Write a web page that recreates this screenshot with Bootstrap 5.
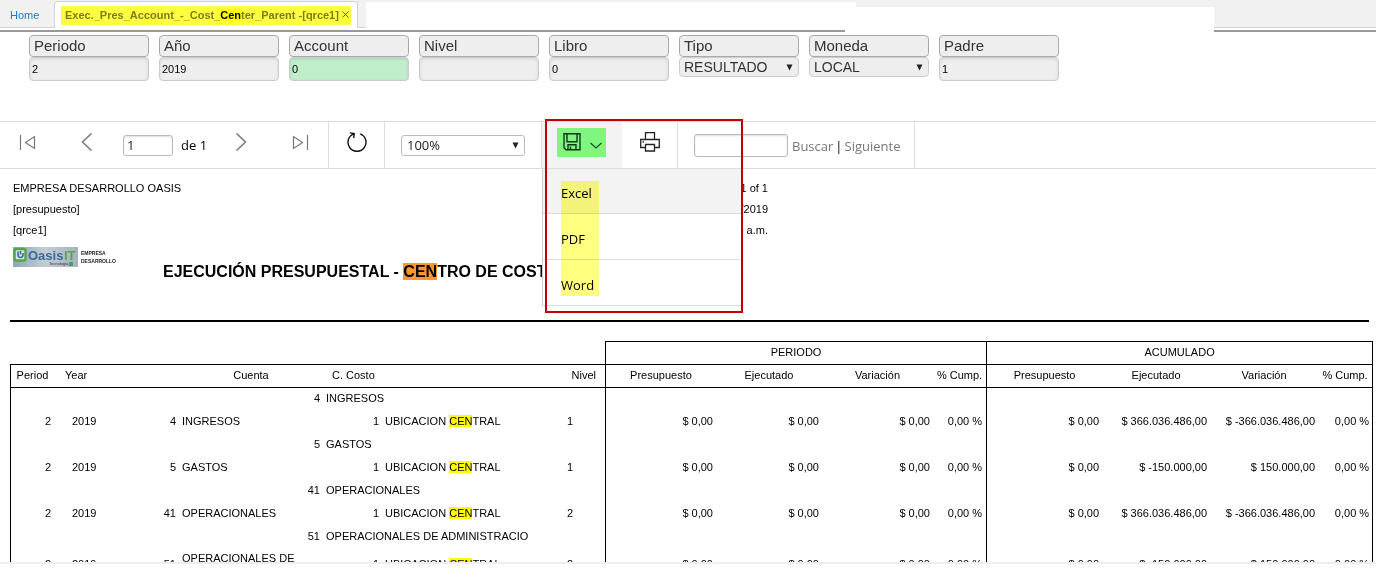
<!DOCTYPE html>
<html lang="es">
<head>
<meta charset="utf-8">
<meta name="viewport" content="width=device-width, initial-scale=1">
<title>Exec._Pres_Account_-_Cost_Center_Parent</title>
<link href="https://cdn.jsdelivr.net/npm/bootstrap@5.3.0/dist/css/bootstrap.min.css" rel="stylesheet">
<style>
body{font-family:"Liberation Sans",Arial,sans-serif;font-size:11px;line-height:13px;color:#000;background:#fff}
button{color:inherit}
svg{display:block}
/* tabs */
.tabstrip{height:28px;background:#f1f1f1}
.tabstrip>*{border-bottom:1px solid #d3d3d3}
.tab-home{width:54px;padding:9px 0 0 10px;color:#0d83c9;text-decoration:none}
.tab-open{border:1px solid #d3d3d3;border-bottom:0!important;border-radius:4px 4px 0 0;background:#fff;width:304px;margin-top:1px;padding:4px 6px}
.tab-gap{width:8px}
.tab-fill{background:#ffff40;color:#7c7c1c;font-weight:bold;height:19px;padding-left:4px;white-space:nowrap}
.tab-fill b{background:#ff0;color:#000}
.tab-x{border:0;background:none;padding:0 0 2px;width:9px}
.blank-a{flex:490 1 0;background:#fff;margin-top:2px;border:0!important}
.blank-b{flex:358 1 0;background:#fff;margin-top:7px;border:0!important}
.tail{flex:162 1 0}
.rule{height:4px;padding-top:2px}
.rule i{background:#999}
.rule i:first-child{flex:845 1 0}
.rule span{flex:369 1 0}
.rule i:last-child{flex:162 1 0}
/* parameters */
.params{padding:3px 29px 0;gap:10px;height:89px}
.param{width:120px}
.param label{display:block;height:22px;border:1px solid #aaa;border-radius:4px;background:#eee;color:#333;font-size:15px;line-height:20px;padding-left:4px}
.param input,.param select{display:block;width:100%;border:1px solid #ccc;border-radius:4px;background-color:#eee;outline:0}
.param input{height:24px;padding:0 2px;box-shadow:inset 0 1px 3px #d4d4d4;color:#000}
.param input.is-set{background-color:#c0eecb;box-shadow:inset 0 1px 3px #a8d4b2}
.param select{height:20px;font-size:14px;line-height:18px;color:#333;padding:0 4px}
select{appearance:none;background-repeat:no-repeat;background-image:url("data:image/svg+xml,%3Csvg xmlns='http://www.w3.org/2000/svg' width='7' height='7'%3E%3Cpath d='M.5 0.5h6L3.500 6.500z' fill='%23222'/%3E%3C/svg%3E");background-position:right 5px center}
/* viewer toolbar */
.viewer-bar{border:1px solid #ddd;border-width:1px 0;font-family:"Open Sans",sans-serif;font-size:13px;line-height:18px}
.cell{height:46px;display:flex;align-items:center;border-right:1px solid #ddd}
.cell button{border:0;background:none;padding:0 0 6px}
.cell input,.cell select{height:21px;border:1px solid #bbb;border-radius:3px;background-color:#fff;color:#222;padding:0 3px;outline:0}
.cell input{box-shadow:inset 0 1px 2px #ddd}
.cell a{color:#777;text-decoration:none}
.nav-cell{padding:0 19px}
.far{margin-left:41px}
.page-no{width:50px;margin:0 8px 0 27px}
.page-of{width:51px}
.icon-cell{width:56px;justify-content:center}
.zoom-cell{padding:0 16px}
.find-cell{width:237px;padding-left:16px}
.zoom-cell select{width:124px;padding-left:5px}
.save-cell{width:80px;padding-left:15px;background:#f3f3f3;border:0;position:relative}
.cell .save-btn{width:49px;height:29px;background:#80f580;padding:5px 4px 0 6px;margin-bottom:5px;display:flex;justify-content:space-between}
.cell .find{width:94px;height:23px;margin-right:4px}
.find-cell a,.find-cell span{padding-top:2px}
.find-cell span{margin:0 2px}
.export-list{position:absolute;left:0;top:46px;width:200px;z-index:3;background:#fff;border-left:1px solid #ccc}
.export-list button{display:block;width:100%;height:46px;text-align:left;padding:4px 0 0 18px;border-bottom:1px solid #ddd}
.export-list button:first-child{background:#f3f3f3;border-top:1px solid #ddd}
.marker{position:absolute;left:19px;top:59px;width:38px;height:115px;background:#ffff80;mix-blend-mode:multiply;z-index:4;pointer-events:none}
.frame{position:absolute;left:3px;top:-3px;width:198px;height:194px;border:2px solid #c00000;z-index:5;pointer-events:none}
/* report */
.report{overflow:hidden;min-height:0}
.head{padding:9px 0 0 13px;width:768px;line-height:21px}
.brand{padding-top:6px}
.report h1{font-size:16px;line-height:20px;font-weight:bold;margin:21px 0 0 46px;white-space:nowrap}
.report h1 span{background:#ff9632}
.bar{height:2px;background:#000;margin:38px 7px 19px 10px}
.data-wrap{margin:0 3px 0 10px}
.data{width:100%;table-layout:fixed;border-collapse:separate;border-spacing:0;white-space:nowrap}
.data th{font-weight:normal;text-align:center;height:23px}
.data td{height:23px}
.data th,.data td{padding:0 3px 1px;vertical-align:middle}
.data tbody td{padding-bottom:3px}
.data .edge{border-left:1px solid #000}
.data .last{border-right:1px solid #000}
.data .grp{border-top:1px solid #000}
.data .cols th{border-top:1px solid #000;border-bottom:1px solid #000;height:24px}
.data .r{text-align:right}
.data .l{text-align:left}
.data td.yr{padding-left:18px}
.data th.yr{padding-left:11px}
.data th.cc{padding-left:9px}
.data th.nv{padding-right:9px}
.data td.nv{padding-left:12px}
.data td.pc{padding-right:4px}
.data .tall td{height:31px;padding-bottom:1px}
.data .tall .name{vertical-align:top;padding-top:3px}
.data .hit{background:#ff0}
.foot{flex:0 0 18px;border-top:2px solid #eee}
</style>
</head>
<body class="vh-100 d-flex flex-column overflow-hidden">
<header>
  <nav class="tabstrip d-flex">
    <a class="tab-home" href="#">Home</a>
    <div class="tab-open"><div class="tab-fill d-flex align-items-center"><span>Exec._Pres_Account_-_Cost_<b>Cen</b>ter_Parent -[qrce1]</span><button class="tab-x ms-auto" type="button" aria-label="Cerrar"><svg width="7" height="7" viewBox="0 0 7 7"><path d="M.5.5l6 6M6.500.5l-6 6" stroke="#666610"/></svg></button></div></div>
    <span class="tab-gap"></span>
    <span class="blank-a"></span><span class="blank-b"></span><span class="tail"></span>
  </nav>
  <div class="rule d-flex"><i></i><span></span><i></i></div>
</header>

<form class="params d-flex flex-shrink-0">
  <div class="param"><label for="p1">Periodo</label><input id="p1" type="text" value="2"></div>
  <div class="param"><label for="p2">Año</label><input id="p2" type="text" value="2019"></div>
  <div class="param"><label for="p3">Account</label><input id="p3" class="is-set" type="text" value="0"></div>
  <div class="param"><label for="p4">Nivel</label><input id="p4" type="text"></div>
  <div class="param"><label for="p5">Libro</label><input id="p5" type="text" value="0"></div>
  <div class="param"><label for="p6">Tipo</label><select id="p6"><option>RESULTADO</option></select></div>
  <div class="param"><label for="p7">Moneda</label><select id="p7"><option>LOCAL</option></select></div>
  <div class="param"><label for="p8">Padre</label><input id="p8" type="text" value="1"></div>
</form>

<div class="viewer-bar d-flex flex-shrink-0">
  <div class="cell nav-cell">
    <button type="button" aria-label="Primera"><svg width="18" height="18" fill="none" stroke="#777" stroke-width="1.200"><path d="M1.500 2v15M15.500 3.500v12L6.500 9.500z"/></svg></button>
    <button class="far" type="button" aria-label="Anterior"><svg width="18" height="18" fill="none" stroke="#777" stroke-width="1.500"><path d="M13.500.5l-9 8.500 9 8.500"/></svg></button>
    <input class="page-no" type="text" value="1" aria-label="Página"><span class="page-of">de 1</span>
    <button type="button" aria-label="Siguiente página"><svg width="18" height="18" fill="none" stroke="#777" stroke-width="1.500"><path d="M4.500.5l9 8.500-9 8.500"/></svg></button>
    <button class="far" type="button" aria-label="Última"><svg width="18" height="18" fill="none" stroke="#777" stroke-width="1.200"><path d="M16.500 2v15M2.500 3.500v12l9-6z"/></svg></button>
  </div>
  <div class="cell icon-cell"><button type="button" aria-label="Actualizar"><svg width="20" height="20" fill="none" stroke="#111" stroke-width="1.400"><path d="M13.200 1.900A9 9 0 1 1 6.800 1.900M2.800.9L7.200 1.600 6.700 6.200"/></svg></button></div>
  <div class="cell zoom-cell"><select aria-label="Zoom"><option>100%</option></select></div>
  <div class="cell save-cell">
    <button class="save-btn" type="button" aria-label="Exportar">
      <svg width="18" height="18" fill="none" stroke="#0a3a14" stroke-width="1.400"><path d="M1 .7h16v16H3L1 14.700zM4 .7v8h10v-8M5 16.700v-5h8v5M7.500 13.500v3"/></svg>
      <svg width="12" height="18" fill="none" stroke="#14501e" stroke-width="1.200"><path d="M.5 10l5.500 5 5.500-5"/></svg>
    </button>
    <div class="export-list"><button type="button">Excel</button><button type="button">PDF</button><button type="button">Word</button></div>
    <div class="marker"></div>
    <div class="frame"></div>
  </div>
  <div class="cell icon-cell"><button type="button" aria-label="Imprimir"><svg width="20" height="20" fill="none" stroke="#222" stroke-width="1.300"><path d="M5.500 7.500v-7h9v7M5.500 15.500h-4.800v-8h18.600v8h-4.800M5.500 12.500h9v6.500h-9zM2.500 10h1.500"/></svg></button></div>
  <div class="cell find-cell"><input class="find" type="text" aria-label="Buscar texto"><a href="#">Buscar</a><span>|</span><a href="#">Siguiente</a></div>
</div>

<main class="report flex-fill">
  <div class="head">
    <div class="d-flex justify-content-between">
      <div>EMPRESA DESARROLLO OASIS<br>[presupuesto]<br>[qrce1]</div>
      <div class="text-end">1 of 1<br>/2019<br>8 a.m.</div>
    </div>
    <div class="d-flex">
      <div class="brand"><svg width="104" height="20" viewBox="0 0 104 20" font-family="Liberation Sans, Arial, sans-serif">
        <defs><linearGradient id="g" x2="1"><stop stop-color="#8fa6b8"/><stop offset=".5" stop-color="#c3ccd4"/><stop offset="1" stop-color="#a5b1bd"/></linearGradient></defs>
        <rect width="65" height="20" fill="url(#g)"/>
        <rect x="1.500" y="2" width="11" height="11.500" rx="2" fill="#d5e2e8" stroke="#55a646" stroke-width="2.500"/>
        <path d="M5 4.500v3q0 3 2.500 3t2.500-3V6M7.500 4v3.500" fill="none" stroke="#3d6c9c" stroke-width="1.600"/>
        <text x="15" y="12.500" font-size="13" font-weight="bold" fill="#39699b">Oasis</text>
        <text x="51" y="12.500" font-size="13" font-weight="bold" fill="#57a449">IT</text>
        <text x="36" y="18" font-size="4" fill="#333">Tecnología</text><rect x="56" y="15" width="4" height="4" fill="#4c9870"/>
        <text x="68" y="8" font-size="5" font-weight="bold" fill="#222">EMPRESA</text>
        <text x="68" y="16" font-size="5" font-weight="bold" fill="#222">DESARROLLO</text>
      </svg></div>
      <h1>EJECUCIÓN PRESUPUESTAL - <span>CEN</span>TRO DE COSTO</h1>
    </div>
  </div>
  <div class="bar"></div>
  <div class="data-wrap">
  <table class="data">
    <colgroup><col style="width:44px"><col style="width:60px"><col style="width:65px"><col style="width:119px"><col style="width:25px"><col style="width:59px"><col style="width:173px"><col style="width:50px"><col style="width:111px"><col style="width:106px"><col style="width:111px"><col style="width:53px"><col style="width:116px"><col style="width:108px"><col style="width:108px"><col style="width:55px"></colgroup>
    <thead>
      <tr><td colspan="8"></td><th class="grp edge" colspan="4">PERIODO</th><th class="grp edge last" colspan="4">ACUMULADO</th></tr>
      <tr class="cols"><th class="edge">Period</th><th class="l yr">Year</th><th></th><th colspan="2">Cuenta</th><th class="l cc" colspan="2">C. Costo</th><th class="r nv">Nivel</th><th class="edge">Presupuesto</th><th>Ejecutado</th><th>Variación</th><th>% Cump.</th><th class="edge">Presupuesto</th><th>Ejecutado</th><th>Variación</th><th class="last">% Cump.</th></tr>
    </thead>
    <tbody>
      <tr><td class="edge" colspan="4"></td><td class="r">4</td><td colspan="3">INGRESOS</td><td class="edge" colspan="4"></td><td class="edge last" colspan="4"></td></tr>
      <tr><td class="edge r">2</td><td class="yr">2019</td><td class="r">4</td><td>INGRESOS</td><td></td><td class="r">1</td><td>UBICACION <span class="hit">CEN</span>TRAL</td><td class="nv">1</td><td class="edge r">$ 0,00</td><td class="r">$ 0,00</td><td class="r">$ 0,00</td><td class="r pc">0,00 %</td><td class="edge r">$ 0,00</td><td class="r">$ 366.036.486,00</td><td class="r">$ -366.036.486,00</td><td class="r last">0,00 %</td></tr>
      <tr><td class="edge" colspan="4"></td><td class="r">5</td><td colspan="3">GASTOS</td><td class="edge" colspan="4"></td><td class="edge last" colspan="4"></td></tr>
      <tr><td class="edge r">2</td><td class="yr">2019</td><td class="r">5</td><td>GASTOS</td><td></td><td class="r">1</td><td>UBICACION <span class="hit">CEN</span>TRAL</td><td class="nv">1</td><td class="edge r">$ 0,00</td><td class="r">$ 0,00</td><td class="r">$ 0,00</td><td class="r pc">0,00 %</td><td class="edge r">$ 0,00</td><td class="r">$ -150.000,00</td><td class="r">$ 150.000,00</td><td class="r last">0,00 %</td></tr>
      <tr><td class="edge" colspan="4"></td><td class="r">41</td><td colspan="3">OPERACIONALES</td><td class="edge" colspan="4"></td><td class="edge last" colspan="4"></td></tr>
      <tr><td class="edge r">2</td><td class="yr">2019</td><td class="r">41</td><td>OPERACIONALES</td><td></td><td class="r">1</td><td>UBICACION <span class="hit">CEN</span>TRAL</td><td class="nv">2</td><td class="edge r">$ 0,00</td><td class="r">$ 0,00</td><td class="r">$ 0,00</td><td class="r pc">0,00 %</td><td class="edge r">$ 0,00</td><td class="r">$ 366.036.486,00</td><td class="r">$ -366.036.486,00</td><td class="r last">0,00 %</td></tr>
      <tr><td class="edge" colspan="4"></td><td class="r">51</td><td colspan="3">OPERACIONALES DE ADMINISTRACIO</td><td class="edge" colspan="4"></td><td class="edge last" colspan="4"></td></tr>
      <tr class="tall"><td class="edge r">2</td><td class="yr">2019</td><td class="r">51</td><td class="name">OPERACIONALES DE</td><td></td><td class="r">1</td><td>UBICACION <span class="hit">CEN</span>TRAL</td><td class="nv">2</td><td class="edge r">$ 0,00</td><td class="r">$ 0,00</td><td class="r">$ 0,00</td><td class="r pc">0,00 %</td><td class="edge r">$ 0,00</td><td class="r">$ -150.000,00</td><td class="r">$ 150.000,00</td><td class="r last">0,00 %</td></tr>
    </tbody>
  </table>
  </div>
</main>
<footer class="foot"></footer>
<script src="https://cdn.jsdelivr.net/npm/bootstrap@5.3.0/dist/js/bootstrap.bundle.min.js"></script>
</body>
</html>
